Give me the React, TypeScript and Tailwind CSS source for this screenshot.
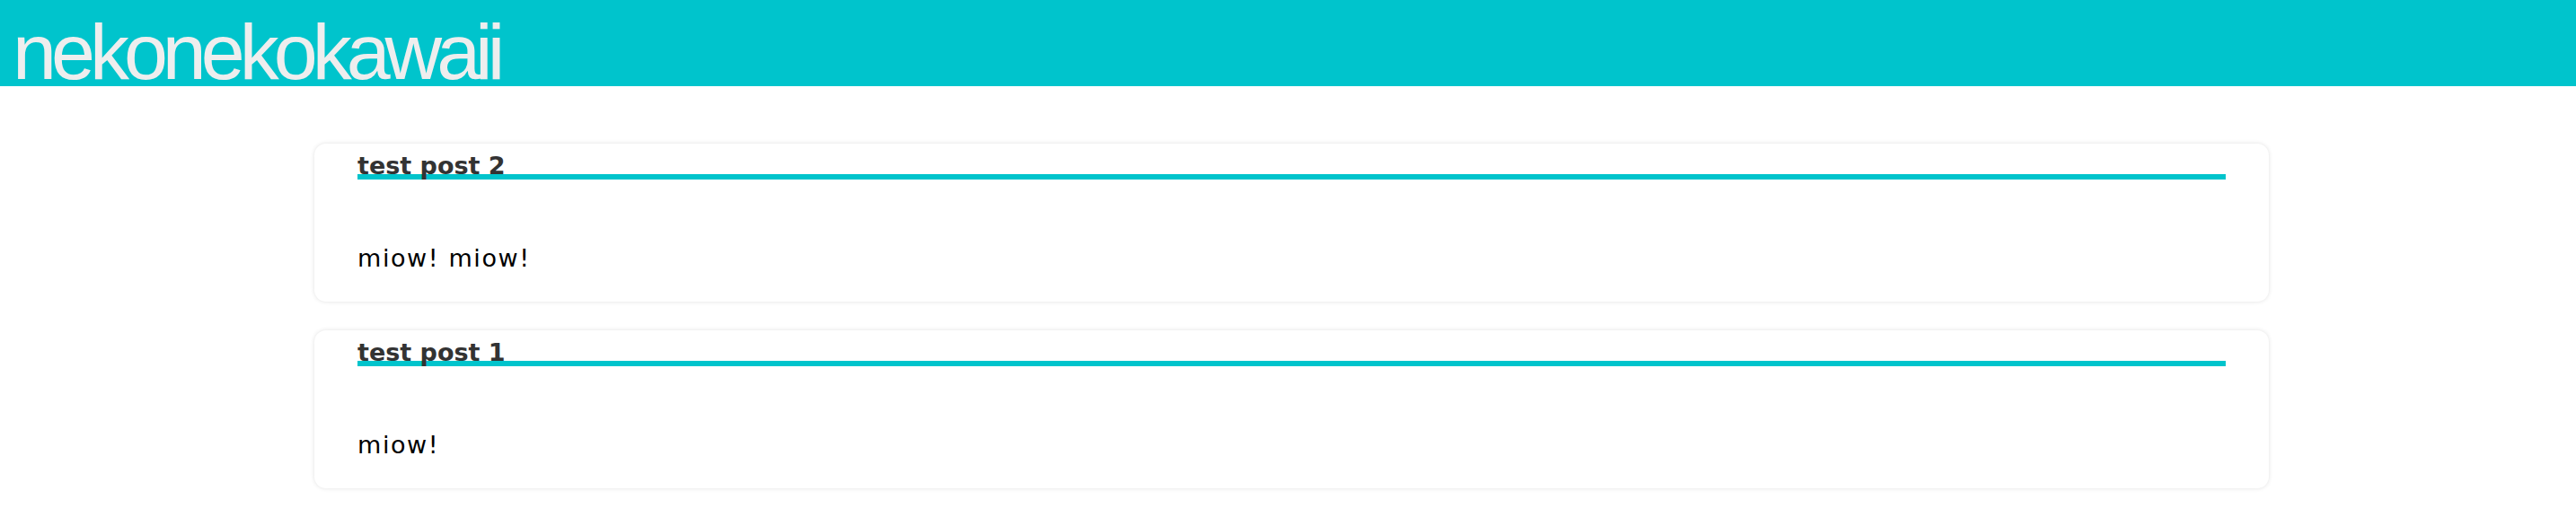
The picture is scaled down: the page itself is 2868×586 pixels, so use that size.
import React from "react";

const posts = [
  { title: "test post 2", body: "miow! miow!" },
  { title: "test post 1", body: "miow!" },
];

export default function App() {
  return (
    <div className="min-h-[586px] bg-white">
      <header className="h-[96px] bg-[#00c4cc]">
        <h1
          className="pl-[14px] pt-[23px] text-[88px] leading-[70px] tracking-[-6px] text-[#eeeeee]"
          style={{ fontFamily: '"Liberation Sans", Arial, sans-serif' }}
        >
          nekonekokawaii
        </h1>
      </header>
      <main className="ml-[350px] mt-[64px] flex w-[2176px] flex-col gap-[32px]">
        {posts.map((p) => (
          <article
            key={p.title}
            className="rounded-[13px] bg-white px-[48px] pt-[9px] pb-[28px] shadow-[0_0_5px_rgba(0,0,0,0.12)]"
          >
            <h2
              className="h-[31px] border-b-[6px] border-[#00c4cc] text-[27px] font-bold leading-[32px] text-[#333333]"
              style={{ fontFamily: '"DejaVu Sans", "Noto Sans CJK JP", sans-serif' }}
            >
              {p.title}
            </h2>
            <p
              className="mt-[68px] text-[27px] leading-[40px] tracking-[1.6px] text-black"
              style={{ fontFamily: '"DejaVu Sans", "Noto Sans CJK JP", sans-serif' }}
            >
              {p.body}
            </p>
          </article>
        ))}
      </main>
    </div>
  );
}
